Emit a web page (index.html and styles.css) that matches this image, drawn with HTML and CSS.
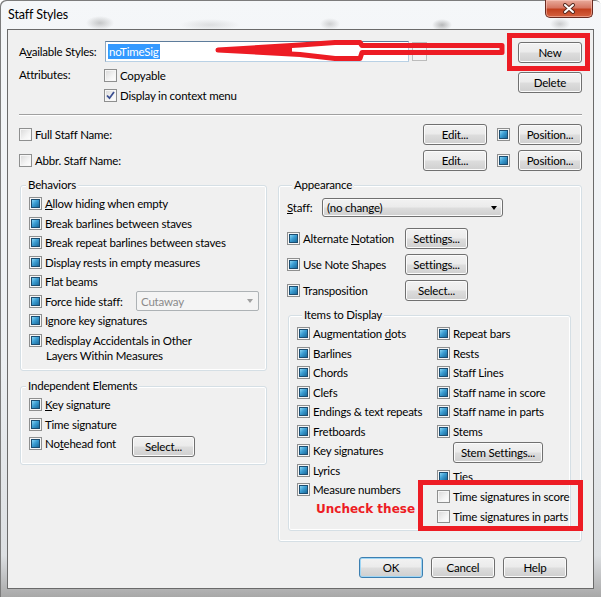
FILE: index.html
```html
<!DOCTYPE html>
<html lang="en">
<head>
  <meta charset="UTF-8" />
  <title>Staff Styles</title>
  <link rel="stylesheet" href="styles.css">
</head>
<body>
<div class="window">
  <div class="titlebar">
    <span class="title">Staff Styles</span>
    <div class="close-btn">
      <svg width="14" height="11" viewBox="0 0 14 11"><path d="M3 2 L11 9 M11 2 L3 9" stroke="#5a2c22" stroke-width="4" stroke-linecap="round"/><path d="M3 2 L11 9 M11 2 L3 9" stroke="#fff" stroke-width="2" stroke-linecap="round"/></svg>
    </div>
  </div>

  <div class="client">
    <div class="top">
      <div class="top-fields">
        <div class="styles-row">
          <span class="top-label">A<u>v</u>ailable Styles:</span>
          <div class="edit-combo">
            <span class="selected">noTimeSig</span>
            <span class="arrow"></span>
          </div>
          <div class="spin"></div>
        </div>
        <div class="attr-row">
          <span class="top-label attr-label">Attributes:</span>
          <div class="attr-list">
            <div class="check"><span class="cb"></span>Copyable</div>
            <div class="check"><span class="cb"><svg width="9" height="9" viewBox="0 0 9 9"><path d="M1 4.5 L3.5 7.2 L8 1" fill="none" stroke="#3b4f91" stroke-width="1.8"/></svg></span>Display in context menu</div>
          </div>
        </div>
      </div>
      <div class="top-buttons">
        <button class="btn">New</button>
        <button class="btn delete-btn">Delete</button>
      </div>
    </div>

    <div class="sep"></div>

    <div class="name-row">
      <span class="cb"></span><span class="name-label">Full Staff Name:</span>
      <button class="btn edit-btn">Edit...</button>
      <span class="cb on"></span>
      <button class="btn">Position...</button>
    </div>
    <div class="name-row second">
      <span class="cb"></span><span class="name-label">Abbr. Staff Name:</span>
      <button class="btn edit-btn">Edit...</button>
      <span class="cb on"></span>
      <button class="btn">Position...</button>
    </div>

    <div class="groups">
      <div class="left-col">
        <fieldset class="group behaviors">
          <legend>Behaviors</legend>
          <div class="rows">
            <div class="check"><span class="cb on"></span><span><u>A</u>llow hiding when empty</span></div>
            <div class="check"><span class="cb on"></span>Break barlines between staves</div>
            <div class="check"><span class="cb on"></span>Break repeat barlines between staves</div>
            <div class="check"><span class="cb on"></span>Display rests in empty measures</div>
            <div class="check"><span class="cb on"></span>Flat beams</div>
            <div class="check"><span class="cb on"></span><span class="force-label">Force hide staff:</span>
              <div class="combo disabled">Cutaway<span class="arrow"></span></div>
            </div>
            <div class="check"><span class="cb on"></span>Ignore key signatures</div>
            <div class="check"><span class="cb on"></span>Redisplay Accidentals in Other</div>
            <div class="wrap-line">Layers Within Measures</div>
          </div>
        </fieldset>

        <fieldset class="group independent">
          <legend>Independent Elements</legend>
          <div class="rows">
            <div class="check"><span class="cb on"></span><span><u>K</u>ey signature</span></div>
            <div class="check"><span class="cb on"></span>Time signature</div>
            <div class="check notehead-row"><span class="cb on"></span><span class="notehead-label">No<u>t</u>ehead font</span>
              <button class="btn select-btn">Select...</button>
            </div>
          </div>
        </fieldset>
      </div>

      <fieldset class="group appearance">
        <legend>Appearance</legend>
        <div class="staff-row">
          <span class="staff-label"><u>S</u>taff:</span>
          <div class="combo list">(no change)<span class="arrow"></span></div>
        </div>
        <div class="app-rows">
          <div class="app-row"><span class="cb on"></span><span class="app-label">Alternate <u>N</u>otation</span><button class="btn">Settings...</button></div>
          <div class="app-row"><span class="cb on"></span><span class="app-label">Use Note Shapes</span><button class="btn">Settings...</button></div>
          <div class="app-row"><span class="cb on"></span><span class="app-label">Transposition</span><button class="btn">Select...</button></div>
        </div>

        <fieldset class="group items">
          <legend>Items to Display</legend>
          <div class="item-cols">
            <div class="item-col">
              <div class="check"><span class="cb on"></span><span>Augmentation <u>d</u>ots</span></div>
              <div class="check"><span class="cb on"></span>Barlines</div>
              <div class="check"><span class="cb on"></span>Chords</div>
              <div class="check"><span class="cb on"></span>Clefs</div>
              <div class="check"><span class="cb on"></span>Endings &amp; text repeats</div>
              <div class="check"><span class="cb on"></span>Fretboards</div>
              <div class="check"><span class="cb on"></span>Key signatures</div>
              <div class="check"><span class="cb on"></span>Lyrics</div>
              <div class="check"><span class="cb on"></span>Measure numbers</div>
            </div>
            <div class="item-col">
              <div class="check"><span class="cb on"></span>Repeat bars</div>
              <div class="check"><span class="cb on"></span>Rests</div>
              <div class="check"><span class="cb on"></span>Staff Lines</div>
              <div class="check"><span class="cb on"></span>Staff name in score</div>
              <div class="check"><span class="cb on"></span>Staff name in parts</div>
              <div class="check"><span class="cb on"></span>Stems</div>
              <button class="btn stem-btn">Stem Settings...</button>
              <div class="check tall first-tall"><span class="cb on"></span>Ties</div>
              <div class="check tall"><span class="cb"></span>Time signatures in score</div>
              <div class="check tall"><span class="cb"></span>Time signatures in parts</div>
            </div>
          </div>
        </fieldset>
      </fieldset>
    </div>

    <div class="footer">
      <button class="btn default-btn">OK</button>
      <button class="btn">Cancel</button>
      <button class="btn">Help</button>
    </div>
  </div>

  <!-- annotations drawn on top of the screenshot -->
  <div class="mark mark-new"></div>
  <div class="mark mark-time"></div>
  <div class="note">Uncheck these</div>
  <svg class="mark-arrow" width="300" height="32" viewBox="210 34 300 32">
    <path d="M502 45.5 H362 L360 42.5 L335 42.5 L300 45 L218 50 L300 54.5 L335 58.5 L360 58.5 L362 52.5 H502 Z" fill="none" stroke="#ed1c24" stroke-width="5" stroke-linejoin="round"/>
    <path d="M217 50 L292 45 L292 55 Z" fill="#ed1c24"/>
  </svg>
</div>
</body>
</html>
```

FILE: styles.css
```css
html, body {
  margin: 0;
  padding: 0;
  background: #ffffff;
}

body {
  font-family: Lato, "Open Sans", sans-serif;
  font-size: 11.5px;
  letter-spacing: -0.2px;
  color: #000;
}

.window {
  position: relative;
  width: 601px;
  height: 597px;
  box-sizing: border-box;
  border-radius: 6px 6px 0 0;
  background: linear-gradient(#f5f7f9 0%, #eceff2 60%, #dcdfe2 93%, #a8a8a8 100%);
  box-shadow: inset 1px 1px 0 #7c7c7c;
  overflow: hidden;
}

.titlebar {
  position: relative;
  height: 29px;
  background:
    radial-gradient(14px 7px at 100px 23px, rgba(110, 110, 110, 0.35), transparent),
    radial-gradient(30px 6px at 210px 25px, rgba(150, 150, 150, 0.25), transparent),
    radial-gradient(10px 6px at 330px 24px, rgba(120, 120, 120, 0.3), transparent),
    radial-gradient(10px 6px at 442px 25px, rgba(90, 90, 90, 0.4), transparent),
    radial-gradient(10px 6px at 560px 24px, rgba(110, 110, 110, 0.3), transparent);
}

.title {
  display: block;
  padding-left: 8px;
  line-height: 30px;
  font-size: 12.5px;
  letter-spacing: -0.1px;
}

.close-btn {
  position: absolute;
  top: 0;
  right: 8px;
  width: 48px;
  height: 18px;
  box-sizing: border-box;
  border: 1px solid #6a2b21;
  border-top: none;
  border-radius: 0 0 5px 5px;
  background: linear-gradient(#e9ab9c 0%, #d67763 45%, #c2401f 55%, #d4613f 100%);
  box-shadow: inset 0 0 0 1px rgba(255, 210, 200, 0.5);
  display: flex;
  align-items: center;
  justify-content: center;
}

.client {
  margin: 0 7px;
  height: 560px;
  box-sizing: border-box;
  border: 1px solid #6a6a6a;
  background: #f0f0f0;
  padding: 11px 11px 0 11px;
  white-space: nowrap;
}

/* ---------- shared controls ---------- */

.cb {
  position: relative;
  flex: none;
  width: 13px;
  height: 13px;
  box-sizing: border-box;
  border: 1px solid #8e8f8f;
  background: linear-gradient(135deg, #d8d8d8 0%, #f4f4f4 60%, #ffffff 100%);
  box-shadow: inset 0 0 0 1px #f6f6f6;
  display: flex;
  align-items: center;
  justify-content: center;
}

.cb.on::after {
  content: "";
  position: absolute;
  inset: 1px;
  border: 1px solid #1c4d70;
  background: linear-gradient(135deg, #8ad6f4 0%, #3b9dd2 45%, #1b6a9a 100%);
}

.btn {
  flex: none;
  width: 64px;
  height: 21px;
  box-sizing: border-box;
  padding: 0;
  font: inherit;
  letter-spacing: inherit;
  color: #000;
  border: 1px solid #707070;
  border-radius: 3px;
  background: linear-gradient(#f2f2f2 0%, #ebebeb 48%, #dddddd 52%, #cfcfcf 100%);
  box-shadow: inset 0 0 0 1px #fbfbfb;
}

.default-btn {
  border-color: #3c7fb1;
  box-shadow: inset 0 0 0 1px #9fd6f5;
}

.check {
  display: flex;
  align-items: center;
  gap: 3px;
}

.arrow {
  width: 0;
  height: 0;
  border-left: 3.5px solid transparent;
  border-right: 3.5px solid transparent;
  border-top: 4px solid #000;
}

.group {
  margin: 0;
  padding: 0;
  border: 1px solid #d5dfe5;
  border-radius: 3px;
  box-shadow: inset 0 0 0 1px #ffffff;
  min-inline-size: 0;
}

.group legend {
  margin-left: 5px;
  padding: 0 2px;
  line-height: 14px;
  background: #f0f0f0;
}

/* ---------- top section ---------- */

.top {
  display: flex;
}

.top-label {
  width: 86px;
  flex: none;
  line-height: 21px;
}

.styles-row {
  display: flex;
  align-items: flex-start;
}

.edit-combo {
  width: 304px;
  height: 21px;
  box-sizing: border-box;
  border: 1px solid;
  border-color: #5d7c9b #b3cbe0 #b9d1e5 #8fa8c1;
  background: #fff;
  display: flex;
  align-items: center;
  padding: 0 3px 0 2px;
}

.selected {
  background: #3399ff;
  color: #fff;
  line-height: 15px;
  padding: 0 1px;
}

.edit-combo .arrow {
  margin-left: auto;
  margin-right: 2px;
}

.spin {
  width: 15px;
  height: 19px;
  margin: 1px 0 0 3px;
  box-sizing: border-box;
  border: 1px solid #bcbcbc;
  background: linear-gradient(#f4f4f4 0 45%, #c8c8c8 45% 52%, #f4f4f4 52%);
}

.attr-row {
  display: flex;
  margin-top: 3px;
}

.attr-label {
  width: 85px;
  line-height: 20px;
}

.attr-list .check {
  height: 20px;
}

.top-buttons {
  margin-left: auto;
  display: flex;
  flex-direction: column;
  padding-top: 1px;
}

.delete-btn {
  margin-top: 9px;
}

.sep {
  margin-top: 9px;
  border-top: 1px solid #a0a0a0;
  border-bottom: 1px solid #ffffff;
}

.name-row {
  display: flex;
  align-items: center;
  height: 21px;
  margin-top: 8px;
}

.name-row.second {
  margin-top: 5px;
}

.name-label {
  margin-left: 3px;
}

.edit-btn {
  margin-left: auto;
  margin-right: 10px;
}

.name-row .cb.on {
  margin-right: 8px;
}

/* ---------- group boxes ---------- */

.groups {
  display: flex;
  align-items: flex-start;
  margin-top: 7px;
}

.left-col {
  width: 247px;
  margin-left: 1px;
  margin-right: 11px;
  flex: none;
}

.rows {
  margin-top: 2px;
  padding-left: 8px;
}

.rows .check {
  height: 19.5px;
}

.behaviors {
  padding-bottom: 8px;
}

.force-label {
  width: 88px;
}

.combo {
  box-sizing: border-box;
  display: flex;
  align-items: center;
  padding: 0 5px 0 4px;
}

.combo .arrow {
  margin-left: auto;
}

.combo.disabled {
  width: 123px;
  height: 20px;
  border: 1px solid #adb2b5;
  border-radius: 2px;
  background: #f4f4f4;
  color: #8a8a8a;
}

.combo.disabled .arrow {
  border-top-color: #a0a0a0;
}

.wrap-line {
  line-height: 12px;
  padding-left: 17px;
}

.independent {
  margin-top: 8px;
  padding-bottom: 7px;
}

.notehead-row.check {
  height: 23px;
  align-items: flex-start;
}

.notehead-row .cb {
  margin-top: 3.25px;
}

.notehead-label {
  line-height: 19.5px;
  width: 84px;
}

.select-btn {
  margin-top: 2px;
  width: 63px;
}

.appearance {
  width: 304px;
  box-sizing: border-box;
  padding: 0 0 10px 8px;
}

.staff-row {
  display: flex;
  align-items: center;
  margin-top: 6px;
}

.staff-label {
  width: 35px;
}

.combo.list {
  width: 181px;
  height: 19px;
  border: 1px solid #707070;
  border-radius: 3px;
  background: linear-gradient(#f2f2f2 0%, #ebebeb 48%, #dddddd 52%, #cfcfcf 100%);
  box-shadow: inset 0 0 0 1px #fbfbfb;
}

.app-rows {
  margin-top: 8px;
}

.app-row {
  display: flex;
  align-items: center;
  height: 26px;
  gap: 3px;
}

.app-label {
  width: 99px;
}

.app-row .btn {
  width: 63px;
}

.items {
  margin: 5px 10px 0 1px;
  padding: 0 0 4px 8px;
}

.item-cols {
  display: flex;
  margin-top: 2px;
}

.item-col {
  display: flex;
  flex-direction: column;
  align-items: flex-start;
}

.item-col:first-child {
  width: 140px;
  flex: none;
}

.item-col .check {
  height: 19.5px;
}

.item-col .check.tall {
  height: 20px;
}

.item-col .first-tall {
  margin-top: 3px;
}

.stem-btn {
  width: 90px;
  margin: 1px 0 0 16px;
}

/* ---------- footer ---------- */

.footer {
  display: flex;
  justify-content: flex-end;
  gap: 8px;
  margin-top: 15px;
  padding-right: 15px;
}

/* ---------- red annotations ---------- */

.mark {
  position: absolute;
  box-sizing: border-box;
  border: 5px solid #ed1c24;
}

.mark-new {
  left: 507px;
  top: 33px;
  width: 83px;
  height: 38px;
}

.mark-time {
  left: 418px;
  top: 480px;
  width: 165px;
  height: 51px;
}

.note {
  position: absolute;
  left: 316px;
  top: 500px;
  font-family: "DejaVu Sans", sans-serif;
  font-weight: bold;
  font-size: 12px;
  letter-spacing: 0;
  line-height: 18px;
  color: #ed1c24;
}

.mark-arrow {
  position: absolute;
  left: 210px;
  top: 34px;
}
```
